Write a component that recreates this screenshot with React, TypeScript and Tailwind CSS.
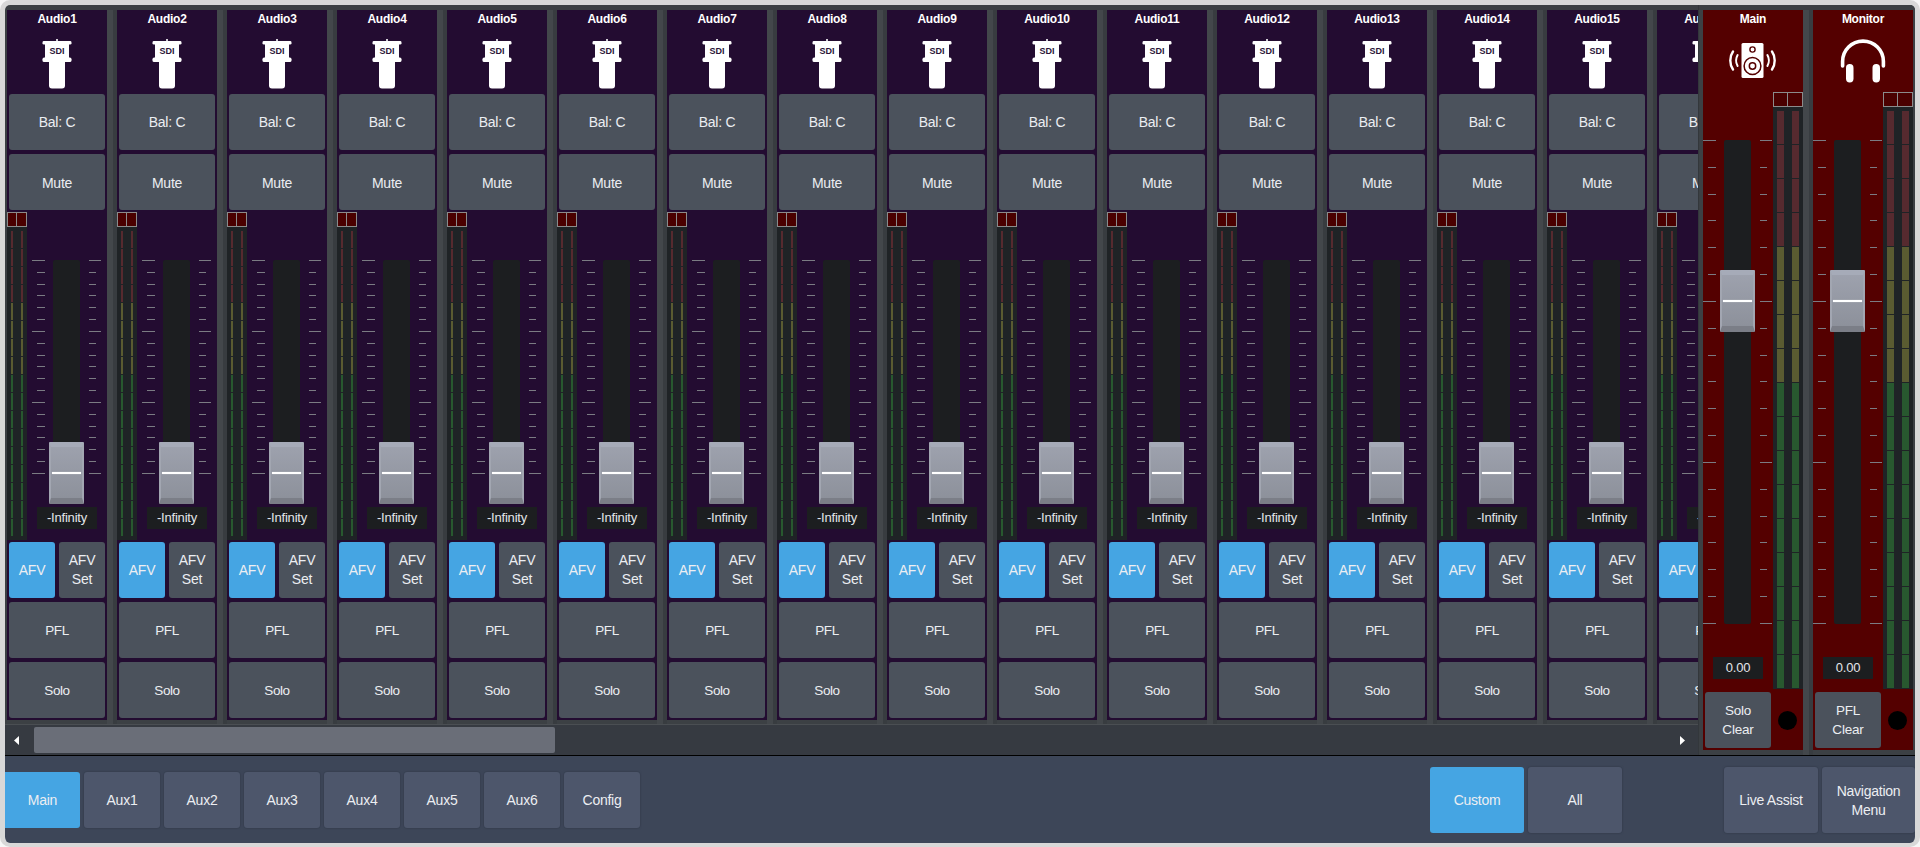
const ticks = Array.from({ length: 19 }, (_, i) => i)
const channels = Array.from({ length: 16 }, (_, i) => `Audio${i + 1}`)
const meterSegs = [
	...Array(4).fill('red'),
	...Array(4).fill('yellow'),
	...Array(9).fill('green'),
] as string[]
const bottomTabs = ['Aux1', 'Aux2', 'Aux3', 'Aux4', 'Aux5', 'Aux6', 'Config']

function Btn({
	children,
	className,
	textClass = 'text-[14px] tracking-[-0.25px]',
}: {
	children: React.ReactNode
	className: string
	textClass?: string
}) {
	return (
		<div
			className={`flex items-center justify-center rounded-[3px] text-center leading-[19px] text-[#eceef2] ${textClass} ${className}`}
		>
			{children}
		</div>
	)
}

function SdiIcon() {
	return (
		<div className="relative h-[50px] w-[30px]">
			<svg width="30" height="50" viewBox="0 0 30 50" fill="#fff">
				<rect x="14.2" y="0" width="1.6" height="3" />
				<rect x="0.5" y="2" width="29" height="3.6" rx="1.4" />
				<rect x="3" y="4" width="24" height="16" />
				<rect x="0.5" y="18.6" width="29" height="4.4" rx="1.6" />
				<path d="M7 22h16v24.5a3 3 0 0 1-3 3h-10a3 3 0 0 1-3-3z" />
			</svg>
			<span className="absolute left-0 right-0 top-[6px] text-center text-[9px] font-bold leading-[12px] text-[#2a1338]">
				SDI
			</span>
		</div>
	)
}

function SpeakerIcon() {
	return (
		<svg width="48" height="38" viewBox="0 0 48 38">
			<rect x="12.5" y="1" width="22" height="35" rx="1.5" fill="#fff" />
			<circle cx="23.5" cy="7.5" r="2.6" fill="none" stroke="#540000" strokeWidth="1.4" />
			<circle cx="23.5" cy="24" r="8.4" fill="none" stroke="#540000" strokeWidth="1.5" />
			<circle cx="23.5" cy="24" r="3.2" fill="none" stroke="#540000" strokeWidth="1.5" />
			<g fill="none" stroke="#fff" strokeLinecap="round">
				<path d="M4 9.5c-3.6 5-3.6 13 0 18" strokeWidth="2.4" />
				<path d="M8.6 13c-1.9 3.4-1.9 7.6 0 11" strokeWidth="2" />
				<path d="M43 9.5c3.6 5 3.6 13 0 18" strokeWidth="2.4" />
				<path d="M38.4 13c1.9 3.4 1.9 7.6 0 11" strokeWidth="2" />
			</g>
		</svg>
	)
}

function HeadphonesIcon() {
	return (
		<svg width="46" height="44" viewBox="0 0 46 44">
			<path
				d="M2.6 27V22.5a20.4 20.4 0 0 1 40.8 0v4.5"
				fill="none"
				stroke="#fff"
				strokeWidth="3.6"
				strokeLinecap="round"
			/>
			<rect x="6" y="25" width="7.5" height="18.5" rx="3.7" fill="#fff" />
			<rect x="32.5" y="25" width="7.5" height="18.5" rx="3.7" fill="#fff" />
		</svg>
	)
}

function PeakBoxes({ boxClass }: { boxClass: string }) {
	return (
		<div className="flex">
			<div className={`h-[15px] border border-[#8b8b8b] bg-[#4a0000] ${boxClass}`} />
			<div className={`h-[15px] border border-l-0 border-[#8b8b8b] bg-[#4a0000] ${boxClass}`} />
		</div>
	)
}

function MeterBar({ segClass }: { segClass: string }) {
	return (
		<div className="flex flex-col">
			{meterSegs.map((c, i) => (
				<div
					key={i}
					className={`mb-px ${segClass} ${
						c === 'red'
							? 'bg-[#562a2f]'
							: c === 'yellow'
								? 'bg-[#5a5b31]'
								: 'bg-[#28582f]'
					}`}
				/>
			))}
		</div>
	)
}

function Fader({
	tall,
	capClass,
}: {
	tall: boolean
	capClass: string
}) {
	const h = tall ? 'h-[484px]' : 'h-[214px]'
	return (
		<div className={`relative flex ${h}`}>
			<div className="flex w-[13px] flex-col items-end justify-between">
				{ticks.map(i => (
					<div
						key={i}
						className={`h-px bg-[#7b7b83] ${i % 6 === 0 ? 'w-[13px]' : 'w-[8px]'}`}
					/>
				))}
			</div>
			<div className="relative ml-[8px] w-[27px] rounded-[2px] bg-[#1c1e20]">
				<div
					className={`absolute left-[-4px] h-[62px] w-[35px] rounded-[1px] border-x-[2px] border-t-[5px] border-b-[6px] border-x-[#a2a6b1] border-t-[#a6abb8] border-b-[#7b7e87] bg-linear-to-b from-[#9da1ad] to-[#8d919b] ${capClass}`}
				>
					<div className="absolute left-[1px] right-[1px] top-[25px] h-[2px] bg-white shadow-[0_0_1px_#e5e7eb]" />
				</div>
			</div>
			<div className="ml-[9px] flex w-[12px] flex-col items-start justify-between">
				{ticks.map(i => (
					<div
						key={i}
						className={`h-px bg-[#7b7b83] ${i % 6 === 0 ? 'w-[12px]' : 'w-[7px]'}`}
					/>
				))}
			</div>
		</div>
	)
}

function ValueBox({ children, className }: { children: string; className: string }) {
	return (
		<div
			className={`mt-[33px] h-[22px] bg-[#1c1e20] text-center text-[13px] leading-[22px] tracking-[-0.2px] text-[#e4e6ea] ${className}`}
		>
			{children}
		</div>
	)
}

function Title({ children }: { children: string }) {
	return (
		<div className="mt-[2px] h-[14px] text-[12px] font-bold leading-[14px] tracking-[-0.25px] text-white">
			{children}
		</div>
	)
}

function Channel({ name }: { name: string }) {
	const narrow = 'text-[13.5px] tracking-[-0.4px]'
	return (
		<div className="flex shrink-0">
			<div className="flex h-[710px] w-[100px] flex-col bg-[#230c31]">
				<div className="flex h-[84px] flex-col items-center">
					<Title>{name}</Title>
					<div className="mt-[13px]">
						<SdiIcon />
					</div>
				</div>
				<div className="flex flex-col gap-[4px] px-[2px]">
					<Btn className="h-[56px] bg-[#4b525c]">Bal: C</Btn>
					<Btn className="h-[56px] bg-[#4b525c] pt-[2px]">Mute</Btn>
				</div>
				<div className="mt-[2px] flex h-[328px]">
					<div className="w-[20px]">
						<PeakBoxes boxClass="w-[10px]" />
						<div className="flex h-[313px] gap-[8px] bg-[#1f2326] pl-[4px] pt-[4px]">
							<MeterBar segClass="h-[17px] w-[2px]" />
							<MeterBar segClass="h-[17px] w-[2px]" />
						</div>
					</div>
					<div className="pl-[5px] pt-[48px]">
						<Fader tall={false} capClass="top-[182px]" />
						<ValueBox className="ml-[5px] w-[60px]">-Infinity</ValueBox>
					</div>
				</div>
				<div className="mt-[2px] flex flex-col gap-[4px] px-[2px]">
					<div className="flex gap-[4px]">
						<Btn className="h-[56px] w-[46px] bg-[#45a5e3]">AFV</Btn>
						<Btn className="h-[56px] w-[46px] bg-[#4b525c]">
							AFV
							<br />
							Set
						</Btn>
					</div>
					<Btn className="h-[56px] bg-[#4b525c]" textClass={narrow}>PFL</Btn>
					<Btn className="h-[56px] bg-[#4b525c]" textClass={narrow}>Solo</Btn>
				</div>
			</div>
			<div className="w-[6px] bg-[#43474b]" />
			<div className="w-[4px] bg-[#383c40]" />
		</div>
	)
}

function MasterStrip({
	name,
	icon,
	clearLabel,
}: {
	name: string
	icon: React.ReactNode
	clearLabel: string
}) {
	return (
		<div className="flex h-[740px] w-[100px] flex-col bg-[#540000]">
			<div className="flex h-[82px] flex-col items-center">
				<Title>{name}</Title>
				<div className="mt-[13px] flex h-[44px] items-center justify-center">{icon}</div>
			</div>
			<div className="flex h-[597px]">
				<div className="w-[70px] pt-[48px]">
					<Fader tall capClass="top-[130px]" />
					<ValueBox className="ml-[10px] w-[50px]">0.00</ValueBox>
				</div>
				<div className="w-[30px]">
					<PeakBoxes boxClass="w-[15px]" />
					<div className="flex h-[582px] gap-[8px] bg-[#1f2326] pl-[4px] pt-[4px]">
						<MeterBar segClass="h-[33px] w-[7px]" />
						<MeterBar segClass="h-[33px] w-[7px]" />
					</div>
				</div>
			</div>
			<div className="mt-[3px] flex items-center pl-[2px]">
				<Btn className="h-[56px] w-[66px] bg-[#4b525c]" textClass="text-[13.5px] tracking-[-0.2px]">
					{clearLabel}
					<br />
					Clear
				</Btn>
				<div className="ml-[7px] h-[19px] w-[19px] rounded-full bg-black" />
			</div>
		</div>
	)
}

function ArrowLeft() {
	return (
		<svg width="5" height="9" viewBox="0 0 5 9" fill="#fff">
			<path d="M5 0v9L0 4.5z" />
		</svg>
	)
}

function ArrowRight() {
	return (
		<svg width="5" height="9" viewBox="0 0 5 9" fill="#fff">
			<path d="M0 0v9l5-4.5z" />
		</svg>
	)
}

export default function App() {
	return (
		<div className="h-[847px] w-[1920px] overflow-hidden bg-[#f7f7f7] font-['Liberation_Sans',Arial,sans-serif]">
			<div className="flex h-[847px] flex-col overflow-hidden rounded-[10px] border-x-[5px] border-b-[4px] border-t-[5px] border-[#d8d8d8]">
				<div className="flex h-[751px] border-b border-black bg-[#3c4044]">
					<div className="flex min-w-0 flex-1 flex-col">
						<div className="flex h-[719px] overflow-hidden pl-[2px] pt-[5px]">
							{channels.map(name => (
								<Channel key={name} name={name} />
							))}
						</div>
						<div className="flex h-[31px] items-center border-t border-[#4a4e52] bg-[#363a41]">
							<div className="ml-[9px]">
								<ArrowLeft />
							</div>
							<div className="ml-[15px] h-[26px] w-[521px] rounded-[2px] bg-[#6a6e78]" />
							<div className="ml-auto mr-[13px]">
								<ArrowRight />
							</div>
						</div>
					</div>
					<div className="flex w-[217px] shrink-0 border-l border-[#33373b] bg-[#3c4044] pl-[4px] pt-[5px]">
						<MasterStrip name="Main" icon={<SpeakerIcon />} clearLabel="Solo" />
						<div className="w-[6px] bg-[#43474b]" />
						<div className="w-[4px] bg-[#383c40]" />
						<MasterStrip name="Monitor" icon={<HeadphonesIcon />} clearLabel="PFL" />
					</div>
				</div>
				<div className="flex flex-1 items-center bg-[#3d4658]">
					<div className="flex gap-[4px]">
						<Btn className="h-[56px] w-[75px] rounded-l-none bg-[#45a5e3] pt-[2px]">Main</Btn>
						{bottomTabs.map(t => (
							<Btn key={t} className="h-[56px] w-[76px] bg-[#4d566b] pt-[2px] shadow-[0_0_2px_#2b3240]">
								{t}
							</Btn>
						))}
					</div>
					<div className="ml-auto mr-[102px] flex gap-[4px]">
						<Btn className="h-[66px] w-[94px] bg-[#45a5e3] pt-[2px]">Custom</Btn>
						<Btn className="h-[66px] w-[94px] bg-[#4d566b] pt-[2px] shadow-[0_0_2px_#2b3240]">All</Btn>
					</div>
					<div className="flex gap-[4px]">
						<Btn className="h-[66px] w-[94px] bg-[#4d566b] pt-[2px] shadow-[0_0_2px_#2b3240]">Live Assist</Btn>
						<Btn className="h-[66px] w-[93px] bg-[#4d566b] pt-[2px] shadow-[0_0_2px_#2b3240]">
							Navigation
							<br />
							Menu
						</Btn>
					</div>
				</div>
			</div>
		</div>
	)
}
